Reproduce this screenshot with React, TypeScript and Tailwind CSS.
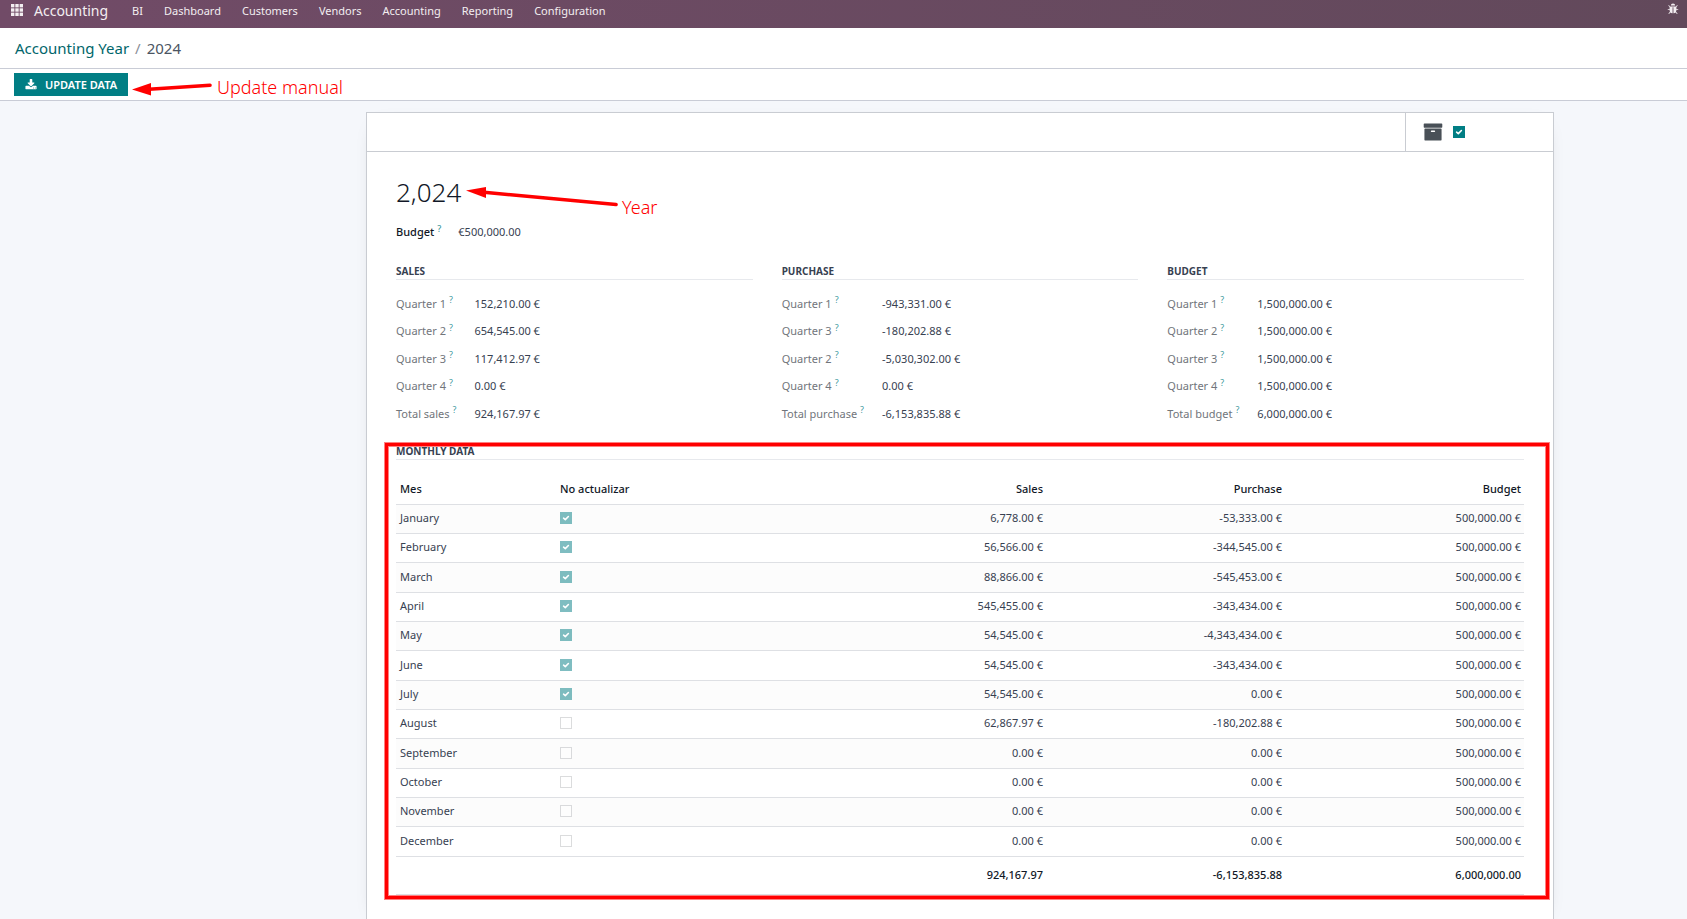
import React from "react";

const NAV_ITEMS = ["BI", "Dashboard", "Customers", "Vendors", "Accounting", "Reporting", "Configuration"];

type Row = { label: string; value: string };

const GROUPS: { title: string; rows: Row[] }[] = [
  {
    title: "Sales",
    rows: [
      { label: "Quarter 1", value: "152,210.00 €" },
      { label: "Quarter 2", value: "654,545.00 €" },
      { label: "Quarter 3", value: "117,412.97 €" },
      { label: "Quarter 4", value: "0.00 €" },
      { label: "Total sales", value: "924,167.97 €" },
    ],
  },
  {
    title: "Purchase",
    rows: [
      { label: "Quarter 1", value: "-943,331.00 €" },
      { label: "Quarter 3", value: "-180,202.88 €" },
      { label: "Quarter 2", value: "-5,030,302.00 €" },
      { label: "Quarter 4", value: "0.00 €" },
      { label: "Total purchase", value: "-6,153,835.88 €" },
    ],
  },
  {
    title: "Budget",
    rows: [
      { label: "Quarter 1", value: "1,500,000.00 €" },
      { label: "Quarter 2", value: "1,500,000.00 €" },
      { label: "Quarter 3", value: "1,500,000.00 €" },
      { label: "Quarter 4", value: "1,500,000.00 €" },
      { label: "Total budget", value: "6,000,000.00 €" },
    ],
  },
];

const MONTHS: { name: string; locked: boolean; sales: string; purchase: string }[] = [
  { name: "January", locked: true, sales: "6,778.00 €", purchase: "-53,333.00 €" },
  { name: "February", locked: true, sales: "56,566.00 €", purchase: "-344,545.00 €" },
  { name: "March", locked: true, sales: "88,866.00 €", purchase: "-545,453.00 €" },
  { name: "April", locked: true, sales: "545,455.00 €", purchase: "-343,434.00 €" },
  { name: "May", locked: true, sales: "54,545.00 €", purchase: "-4,343,434.00 €" },
  { name: "June", locked: true, sales: "54,545.00 €", purchase: "-343,434.00 €" },
  { name: "July", locked: true, sales: "54,545.00 €", purchase: "0.00 €" },
  { name: "August", locked: false, sales: "62,867.97 €", purchase: "-180,202.88 €" },
  { name: "September", locked: false, sales: "0.00 €", purchase: "0.00 €" },
  { name: "October", locked: false, sales: "0.00 €", purchase: "0.00 €" },
  { name: "November", locked: false, sales: "0.00 €", purchase: "0.00 €" },
  { name: "December", locked: false, sales: "0.00 €", purchase: "0.00 €" },
];

function AppsIcon() {
  return (
    <svg className="size-3" viewBox="0 0 12 12" fill="currentColor" aria-hidden="true">
      {[0, 4.3, 8.6].map((y) => [0, 4.3, 8.6].map((x) => <rect key={`${x}-${y}`} x={x} y={y} width="3.4" height="3.4" />))}
    </svg>
  );
}

function BugIcon() {
  return (
    <svg className="size-3" viewBox="0 0 1792 1792" fill="currentColor" aria-hidden="true">
      <path d="M1696 960q0 26-19 45t-45 19h-224q0 171-67 290l208 209q19 19 19 45t-19 45q-18 19-45 19t-45-19l-198-197q-5 5-15 13t-42 28.5-65 36.5-82 29-97 13v-896h-128v896q-51 0-101.5-13.5t-87-33-66-39-43.5-32.5l-15-14-183 207q-20 21-48 21-24 0-43-16-19-18-20.5-44.5t15.5-46.5l202-227q-58-114-58-274h-224q-26 0-45-19t-19-45 19-45 45-19h224v-294l-173-173q-19-19-19-45t19-45 45-19 45 19l173 173h844l173-173q19-19 45-19t45 19 19 45-19 45l-173 173v294h224q26 0 45 19t19 45zm-480-576h-640q0-133 93.5-226.5t226.5-93.5 226.5 93.5 93.5 226.5z" />
    </svg>
  );
}

function DownloadIcon() {
  return (
    <svg className="size-3" viewBox="0 0 1792 1792" fill="currentColor" aria-hidden="true">
      <path d="M1344 1344q0-26-19-45t-45-19-45 19-19 45 19 45 45 19 45-19 19-45zm256 0q0-26-19-45t-45-19-45 19-19 45 19 45 45 19 45-19 19-45zm128-224v320q0 40-28 68t-68 28h-1472q-40 0-68-28t-28-68v-320q0-40 28-68t68-28h465l135 136q58 56 136 56t136-56l136-136h464q40 0 68 28t28 68zm-325-569q17 41-14 70l-448 448q-18 19-45 19t-45-19l-448-448q-31-29-14-70 17-39 59-39h256v-448q0-26 19-45t45-19h256q26 0 45 19t19 45v448h256q42 0 59 39z" />
    </svg>
  );
}

function ArchiveIcon() {
  return (
    <svg className="size-5" viewBox="0 0 1792 1792" fill="currentColor" aria-hidden="true">
      <path d="M1088 832q0-26-19-45t-45-19h-256q-26 0-45 19t-19 45 19 45 45 19h256q26 0 45-19t19-45zm576-192v960q0 26-19 45t-45 19h-1408q-26 0-45-19t-19-45v-960q0-26 19-45t45-19h1408q26 0 45 19t19 45zm64-448v256q0 26-19 45t-45 19h-1536q-26 0-45-19t-19-45v-256q0-26 19-45t45-19h1536q26 0 45 19t19 45z" />
    </svg>
  );
}

function Checkbox({ label, checked, disabled = false }: { label: string; checked: boolean; disabled?: boolean }) {
  return (
    <span className="grid size-3 *:col-start-1 *:row-start-1">
      <input
        type="checkbox"
        aria-label={label}
        defaultChecked={checked}
        disabled={disabled}
        className="peer size-3 appearance-none border border-[#b8babd] bg-white checked:border-[#017e84] checked:bg-[#017e84] disabled:opacity-50"
      />
      <svg
        className="pointer-events-none invisible relative size-3 text-white peer-checked:visible"
        viewBox="0 0 12 12"
        fill="none"
        stroke="currentColor"
        strokeWidth="1.6"
        aria-hidden="true"
      >
        <path d="M3.6 6.2 5.3 7.6 8.4 4.5" strokeLinecap="round" strokeLinejoin="round" />
      </svg>
    </span>
  );
}

function Hint() {
  return <sup className="ml-[3px] text-[9px] leading-none text-[#017e84]/80">?</sup>;
}

function SectionTitle({ children }: { children: React.ReactNode }) {
  return <h2 className="border-b border-[#e7e9ed] text-[10px] leading-4 font-bold text-[#374151] uppercase">{children}</h2>;
}

function FieldGroup({ title, rows }: { title: string; rows: Row[] }) {
  return (
    <section>
      <SectionTitle>{title}</SectionTitle>
      <dl className="mt-[10px] grid grid-cols-[auto_1fr] grid-rows-[27px_28px_27px_28px_27px] items-center gap-x-[18px]">
        {rows.map((row) => (
          <React.Fragment key={row.label}>
            <dt className="whitespace-nowrap text-[#71757b]">
              {row.label}
              <Hint />
            </dt>
            <dd className="text-[#374151]">{row.value}</dd>
          </React.Fragment>
        ))}
      </dl>
    </section>
  );
}

export default function App() {
  return (
    <div className="flex min-h-screen flex-col bg-[#f5f7fb] font-['Noto_Sans',sans-serif] text-[11px] leading-4 text-[#374151]">
      <header className="flex h-7 items-start justify-between bg-linear-to-r from-[#714b67] to-[#62495b] pr-2 pl-[11px] leading-[22px] text-[#f3eef1]">
        <nav className="flex">
          <button type="button" aria-label="Applications" className="mr-[11px] flex h-5 items-center">
            <AppsIcon />
          </button>
          <a href="#accounting" className="mr-6 text-sm leading-[22px]">
            Accounting
          </a>
          <div className="flex gap-[21px]">
            {NAV_ITEMS.map((item) => (
              <a key={item} href={`#${item.toLowerCase()}`}>
                {item}
              </a>
            ))}
          </div>
        </nav>
        <button type="button" aria-label="Debug tools" className="flex h-[17px] items-center">
          <BugIcon />
        </button>
      </header>

      <div className="flex h-[41px] items-center border-b border-[#c9ccd6] bg-white pl-[15px] text-[15px] leading-5">
        <nav className="flex gap-[6px]" aria-label="Breadcrumb">
          <a href="#years" className="text-[#01666b]">
            Accounting Year
          </a>
          <span className="text-[#8a8f98]">/</span>
          <span className="text-[#4b5563]">2024</span>
        </nav>
      </div>

      <div className="relative flex h-8 items-center border-b border-[#c9ccd6] bg-white pl-[14px]">
        <button
          type="button"
          className="flex h-[23px] items-center gap-2 bg-[#017e84] px-[11px] text-[11px] font-semibold text-white uppercase"
        >
          <DownloadIcon />
          Update data
        </button>
        <svg className="absolute top-3 left-[131px] h-4 w-[84px]" viewBox="0 0 84 16" fill="#ff0000" aria-hidden="true">
          <path d="M1 8.5 20 2V14.5Z" />
          <path d="M18 8.3 79 4.2" stroke="#ff0000" strokeWidth="3.6" strokeLinecap="round" />
        </svg>
        <span className="absolute top-[6px] left-[217px] text-lg leading-6 font-light text-[#ff0000]">Update manual</span>
      </div>

      <main className="flex flex-1 flex-col pt-[11px] pr-[133px] pl-[366px]">
        <div className="flex-1 border border-b-0 border-[#c9ccd2] bg-white shadow-[0_5px_20px_-15px_rgba(0,0,0,0.4)]">
          <div className="flex h-[39px] justify-end border-b border-[#c9ccd2]">
            <div className="flex w-[148px] items-center gap-[10px] border-l border-[#c9ccd2] pb-px pl-[17px] text-[#495057]">
              <ArchiveIcon />
              <Checkbox label="Active" checked />
            </div>
          </div>

          <div className="px-[29px] pt-6">
            <div className="relative">
              <h1 className="text-[26px] leading-8 font-light text-[#111827]">2,024</h1>
              <svg className="absolute top-2 left-[69px] h-6 w-[156px]" viewBox="0 0 156 24" fill="#ff0000" aria-hidden="true">
                <path d="M1 6.5 21 3V14Z" />
                <path d="M19 8.3 151 20.5" stroke="#ff0000" strokeWidth="3.6" strokeLinecap="round" />
              </svg>
              <span className="absolute top-[19px] left-[226px] text-lg leading-6 font-light text-[#ff0000]">Year</span>
            </div>

            <dl className="mt-4 flex gap-[17px]">
              <dt className="font-medium text-[#111827]">
                Budget
                <Hint />
              </dt>
              <dd>€500,000.00</dd>
            </dl>

            <div className="mt-[23px] grid grid-cols-3 gap-[29px]">
              {GROUPS.map((group) => (
                <FieldGroup key={group.title} title={group.title} rows={group.rows} />
              ))}
            </div>

            <section className="relative mt-4">
              <SectionTitle>Monthly data</SectionTitle>
              <table className="mt-[14px] w-full table-fixed border-collapse text-right">
                <colgroup>
                  <col className="w-[160px]" />
                  <col />
                  <col className="w-[239px]" />
                  <col className="w-[239px]" />
                  <col className="w-[239px]" />
                </colgroup>
                <thead>
                  <tr className="h-[30px] border-b border-[#dee0e4] text-[#111827] *:p-0 *:font-medium">
                    <th className="text-left">
                      <span className="pl-1">Mes</span>
                    </th>
                    <th className="text-left">
                      <span className="pl-1">No actualizar</span>
                    </th>
                    <th>
                      <span className="pr-[3px]">Sales</span>
                    </th>
                    <th>
                      <span className="pr-[3px]">Purchase</span>
                    </th>
                    <th>
                      <span className="pr-[3px]">Budget</span>
                    </th>
                  </tr>
                </thead>
                <tbody>
                  {MONTHS.map((month) => (
                    <tr
                      key={month.name}
                      className="h-[29px] border-b border-[#dee0e4] *:pb-px odd:bg-[#fcfcfc] nth-[3n]:h-[30px]"
                    >
                      <td className="pl-1 text-left">{month.name}</td>
                      <td className="pl-1">
                        <Checkbox label={`No actualizar ${month.name}`} checked={month.locked} disabled />
                      </td>
                      <td className="pr-[3px]">{month.sales}</td>
                      <td className="pr-[3px]">{month.purchase}</td>
                      <td className="pr-[3px]">500,000.00 €</td>
                    </tr>
                  ))}
                </tbody>
                <tfoot>
                  <tr className="h-[38px] border-b border-[#dee0e4] font-medium text-[#111827]">
                    <td />
                    <td />
                    <td className="pr-[3px]">924,167.97</td>
                    <td className="pr-[3px]">-6,153,835.88</td>
                    <td className="pr-[3px]">6,000,000.00</td>
                  </tr>
                </tfoot>
              </table>
              <div className="pointer-events-none absolute top-0 -right-[25px] -bottom-1 -left-[11px] border-[3px] border-[#ff0000] shadow-[0_0_0_1px_#ff8080,inset_0_0_0_1px_#ff8080]" />
            </section>
          </div>
        </div>
      </main>
    </div>
  );
}
